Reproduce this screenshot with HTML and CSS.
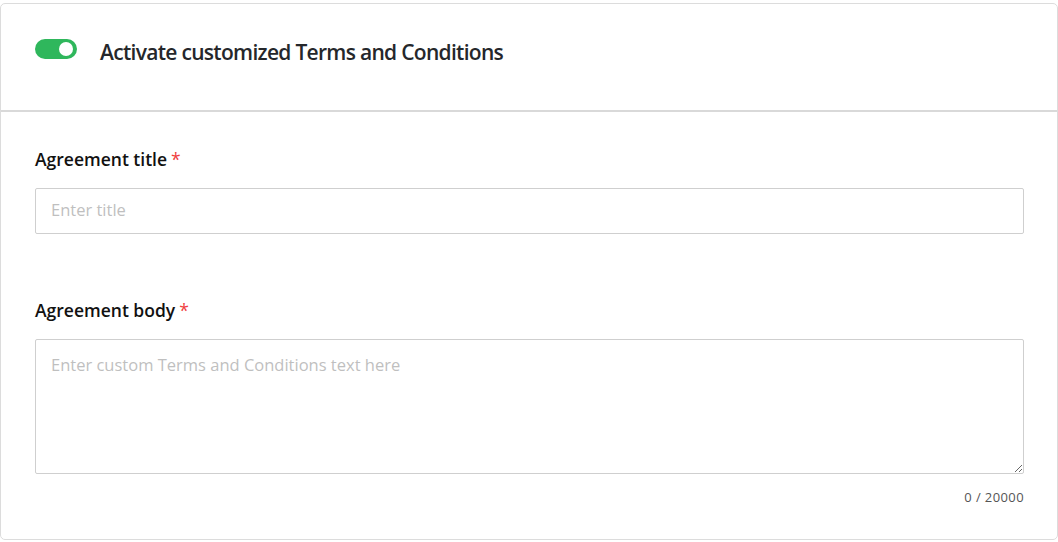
FILE: index.html
```html
<!DOCTYPE html>
<html lang="en">
<head>
<meta charset="utf-8">
<link rel="stylesheet" href="styles.css">
</head>
<body>
<div class="card">
  <div class="card-header">
    <span class="toggle"><span class="knob"></span></span>
    <h2 class="title">Activate customized Terms and Conditions</h2>
  </div>
  <div class="card-body">
    <div class="field">
      <label class="label">Agreement title<span class="req">*</span></label>
      <input class="input" type="text" placeholder="Enter title">
    </div>
    <div class="field field-body">
      <label class="label">Agreement body<span class="req">*</span></label>
      <textarea class="textarea" placeholder="Enter custom Terms and Conditions text here"></textarea>
      <div class="counter">0 / 20000</div>
    </div>
  </div>
</div>
</body>
</html>
```

FILE: styles.css
```css
html, body {
  margin: 0;
  padding: 0;
  background: #fff;
}
body {
  padding-top: 3px;
  font-family: "Open Sans", "Noto Sans", sans-serif;
  color: #222;
}
.card {
  width: 1058px;
  box-sizing: border-box;
  height: 537px;
  border: 1px solid #dcdcdc;
  border-radius: 5px;
  background: #fff;
}
.card-header {
  height: 108px;
  box-sizing: border-box;
  padding: 35px 34px 0;
  display: flex;
  align-items: flex-start;
  border-bottom: 2px solid #d9d9d9;
}
.toggle {
  width: 42px;
  height: 20px;
  border-radius: 10px;
  background: #2fb75c;
  position: relative;
  flex: none;
}
.knob {
  position: absolute;
  right: 4px;
  top: 3px;
  width: 14px;
  height: 14px;
  border-radius: 50%;
  background: #fff;
}
.title {
  margin: -2px 0 0 23px;
  font-size: 21px;
  line-height: 30px;
  font-weight: 600;
  color: #25272b;
  letter-spacing: -0.7px;
}
.card-body {
  padding: 35px 34px 0;
}
.field {
  display: flex;
  flex-direction: column;
}
.field-body {
  margin-top: 64px;
}
.label {
  font-size: 17.5px;
  line-height: 24px;
  font-weight: 600;
  color: #111;
  margin-bottom: 17px;
}
.req {
  color: #ef4040;
  margin-left: 4px;
  font-weight: 400;
}
.input, .textarea {
  width: 989px;
  box-sizing: border-box;
  border: 1px solid #cfcfcf;
  border-radius: 2px;
  font-family: "Open Sans", "Noto Sans", sans-serif;
  font-size: 16.5px;
  color: #333;
  outline: none;
  margin: 0;
}
.input {
  height: 46px;
  padding: 0 15px 3px;
}
.textarea {
  height: 135px;
  padding: 13px 15px;
  resize: vertical;
  display: block;
}
.input::placeholder, .textarea::placeholder {
  color: #bfbfbf;
}
.counter {
  width: 989px;
  text-align: right;
  font-size: 13px;
  line-height: 16px;
  letter-spacing: 0.4px;
  color: #555;
  margin-top: 15px;
}
```
